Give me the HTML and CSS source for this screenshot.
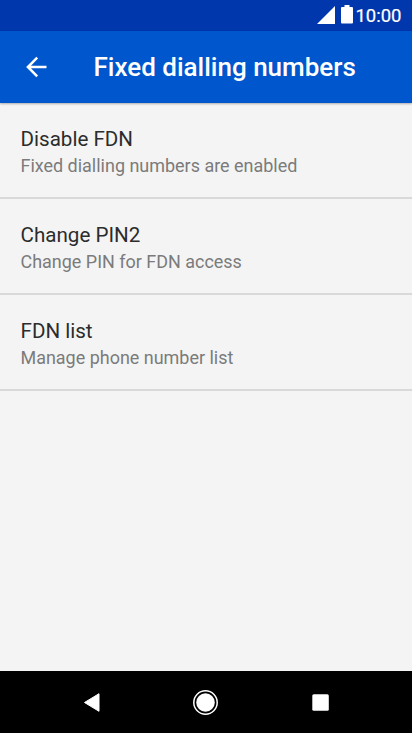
FILE: index.html
```html
<!DOCTYPE html>
<html lang="en">
<head>
<meta charset="utf-8">
<title>Fixed dialling numbers</title>
<link rel="stylesheet" href="styles.css">
</head>
<body>
<div class="screen">
  <div class="status">
    <svg class="signal" width="18" height="18" viewBox="0 0 18 18"><path d="M0 18L18 0V18Z"/></svg>
    <svg class="battery" width="12" height="19" viewBox="0 0 12 19"><path d="M3.500 0h5v2H11q1 0 1 1v14.500q0 1-1 1H1q-1 0-1-1V3q0-1 1-1h2.500Z"/></svg>
    <span class="clock">10:00</span>
  </div>
  <header class="bar">
    <svg class="back" width="22" height="22" viewBox="0 0 22 22"><path d="M20.500 11H2M11.200 1.700L1.900 11l9.300 9.300"/></svg>
    <h1 class="title">Fixed dialling numbers</h1>
  </header>
  <main class="list">
    <div class="item"><div class="name">Disable FDN</div><div class="summary">Fixed dialling numbers are enabled</div></div>
    <div class="item"><div class="name">Change PIN2</div><div class="summary">Change PIN for FDN access</div></div>
    <div class="item"><div class="name">FDN list</div><div class="summary">Manage phone number list</div></div>
  </main>
  <nav class="nav">
    <svg width="412" height="62" viewBox="0 671 412 62"><path d="M84.500 702.500L99 693.700V711.300Z" stroke="#fff" stroke-linejoin="round"/><circle cx="205.500" cy="702.500" r="9.300"/><circle cx="205.500" cy="702.500" r="11.700" fill="none" stroke="#fff" stroke-width="1.500"/><rect x="312.300" y="694.300" width="16.500" height="16.500" rx="1.500"/></svg>
  </nav>
</div>
</body>
</html>
```
FILE: styles.css
```css
* { box-sizing: border-box; }
body { margin: 0; font-family: Roboto, sans-serif; }
.screen { width: 412px; height: 733px; display: flex; flex-direction: column; background: #f4f4f4; overflow: hidden; }
.status { height: 31px; background: #0037ad; color: #fff; display: flex; justify-content: flex-end; padding: 6px 10.500px 0 0; }
.status svg { fill: #fff; }
.battery { margin: -1px 0 0 6px; }
.clock { margin-left: 2.500px; font-size: 18.500px; line-height: 20px; -webkit-text-stroke: .2px #fff; }
.bar { height: 72px; background: #0056cc; color: #fff; display: flex; align-items: center; padding-left: 25.700px; box-shadow: 0 1px 2px rgba(0, 0, 0, .3); }
.back { fill: none; stroke: #fff; stroke-width: 2.500; }
.title { margin: 0 0 0 45.800px; font-size: 26px; font-weight: 500; line-height: 30px; white-space: nowrap; }
.list { flex: 1; }
.item { height: 96px; padding: 24px 20.500px 0; border-bottom: 2px solid #d9d9d9; }
.name { font-size: 20.600px; line-height: 25px; color: #2c2c2c; }
.summary { margin-top: 3px; font-size: 17.970px; line-height: 22px; color: #7b7b7b; }
.nav { height: 62px; background: #000; }
.nav svg { display: block; fill: #fff; }
```
